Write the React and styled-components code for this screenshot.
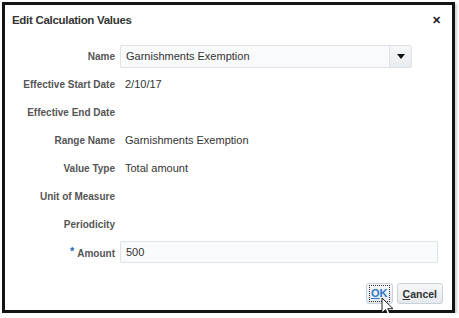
import React from 'react'
import styled, { createGlobalStyle } from 'styled-components'

const GlobalStyle = createGlobalStyle`
  html, body {
    margin: 0;
    padding: 0;
    background: #ffffff;
  }
  body {
    font-family: 'Liberation Sans', Arial, sans-serif;
    -webkit-font-smoothing: antialiased;
  }
`

const rows = [
  { label: 'Name', kind: 'select', value: 'Garnishments Exemption' },
  { label: 'Effective Start Date', value: '2/10/17' },
  { label: 'Effective End Date', value: '' },
  { label: 'Range Name', value: 'Garnishments Exemption' },
  { label: 'Value Type', value: 'Total amount' },
  { label: 'Unit of Measure', value: '' },
  { label: 'Periodicity', value: '' },
  { label: 'Amount', kind: 'input', value: '500', required: true },
]

const App = () => {
  return (
    <>
      <GlobalStyle />
      <Dialog>
        <Header>
          <Title>Edit Calculation Values</Title>
          <Close>✕</Close>
        </Header>
        <Form>
          {rows.map(row => (
            <React.Fragment key={row.label}>
              <Label>
                {row.required && <Star>*</Star>}
                {row.label}
              </Label>
              {row.kind === 'select' && (
                <Select>
                  <FieldText>{row.value}</FieldText>
                  <Arrow>
                    <svg width="8" height="5" viewBox="0 0 8 5">
                      <path d="M0 0h8L4 5z" fill="#111" />
                    </svg>
                  </Arrow>
                </Select>
              )}
              {row.kind === 'input' && (
                <Input>
                  <FieldText>{row.value}</FieldText>
                </Input>
              )}
              {!row.kind && <Value>{row.value}</Value>}
            </React.Fragment>
          ))}
        </Form>
        <Footer>
          <Button focused>
            <FocusRing>
              <Key>O</Key>K
            </FocusRing>
            <Cursor width="14" height="21" viewBox="0 0 14 21">
              <path
                d="M1 1v15l3.5-3.5 3 6.5 2.2-1-3-6.3H12z"
                fill="#fff"
                stroke="#222"
                strokeWidth="1"
                strokeLinejoin="round"
              />
            </Cursor>
          </Button>
          <Button>
            <Key>C</Key>ancel
          </Button>
        </Footer>
      </Dialog>
    </>
  )
}

export default App

const Dialog = styled.div`
  box-sizing: border-box;
  margin: 2px 0 0 2px;
  width: 453px;
  height: 311px;
  border: 3px solid #141414;
  background: #fff;
  box-shadow: 2px 2px 2px rgba(0, 0, 0, 0.18);
  display: flex;
  flex-direction: column;
`

const Header = styled.div`
  display: flex;
  align-items: center;
  justify-content: space-between;
  height: 30px;
  padding: 0 11px 0 7px;
`

const Title = styled.div`
  font-size: 11.5px;
  font-weight: bold;
  letter-spacing: -0.3px;
  color: #333;
`

const Close = styled.div`
  font-size: 11px;
  font-weight: bold;
  color: #222;
`

const Form = styled.div`
  display: grid;
  grid-template-columns: 110px 1fr;
  grid-auto-rows: 28px;
  column-gap: 5px;
  align-items: center;
  margin-top: 7px;
  padding-right: 15px;
`

const Label = styled.div`
  text-align: right;
  font-size: 10px;
  font-weight: bold;
  color: #555;
  white-space: nowrap;
`

const Star = styled.span`
  color: #1c66b0;
  font-size: 11px;
  margin-right: 3px;
  vertical-align: 2px;
`

const Value = styled.div`
  padding-left: 5px;
  font-size: 11px;
  color: #333;
`

const fieldBase = `
  box-sizing: border-box;
  height: 22px;
  display: flex;
  align-items: center;
  background: #f9fafb;
  border: 1px solid #dfe3e7;
  border-radius: 2px;
`

const Select = styled.div`
  ${fieldBase}
  width: 292px;
  height: 23px;
`

const Input = styled.div`
  ${fieldBase}
  width: 318px;
`

const FieldText = styled.span`
  flex: 1;
  padding-left: 5px;
  font-size: 11px;
  color: #333;
`

const Arrow = styled.div`
  width: 21px;
  align-self: stretch;
  display: flex;
  align-items: center;
  justify-content: center;
  border-left: 1px solid #dfe3e7;
  background: linear-gradient(#f6f7f8, #e9ecef);
`

const Footer = styled.div`
  margin-top: auto;
  display: flex;
  justify-content: flex-end;
  gap: 4px;
  padding: 0 9px 6px 0;
`

const Button = styled.div`
  position: relative;
  box-sizing: border-box;
  height: 21px;
  padding: 0 ${p => (p.focused ? '2px' : '5px')};
  display: flex;
  align-items: center;
  border: 1px solid #c8d0d8;
  border-radius: 3px;
  background: linear-gradient(#f7f8fa, #e5e9ed);
  font-size: ${p => (p.focused ? '11px' : '10.5px')};
  font-weight: bold;
  color: ${p => (p.focused ? '#2a78c8' : '#333')};
`

const FocusRing = styled.span`
  padding: 2px 1px;
  border: 1px dotted #333;
  line-height: 11px;
`

const Key = styled.span`
  text-decoration: underline;
`

const Cursor = styled.svg`
  position: absolute;
  left: 14px;
  top: 13px;
`
